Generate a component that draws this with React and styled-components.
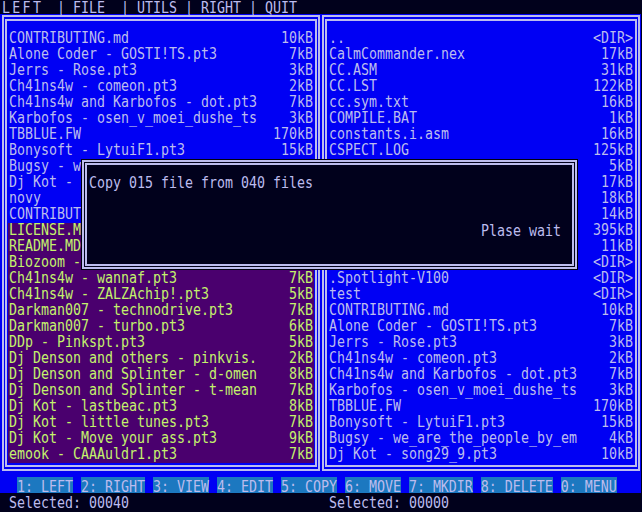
import React from 'react';
import styled, { createGlobalStyle } from 'styled-components';

const C = {
  navy: '#01011c',
  blue: '#0000f4',
  ink: '#bcbcee',
  purple: '#4a006e',
  lime: '#c4f26c',
  key: '#1c78c0',
};

const GlobalStyle = createGlobalStyle`
  html, body {
    margin: 0;
    padding: 0;
    background: ${C.navy};
  }
  body {
    font-family: "DejaVu Sans Mono", "Liberation Mono", monospace;
    font-size: 13.29px;
  }
`;

const Screen = styled.div`
  position: relative;
  width: 642px;
  height: 512px;
  background: ${C.navy};
  color: ${C.ink};
  display: flex;
  flex-direction: column;
  overflow: hidden;
`;

// tall, narrow "ZX" look: stretch the glyphs vertically
const Txt = styled.span`
  display: inline-block;
  white-space: pre;
  line-height: ${({ $lh }) => $lh || 16}px;
  letter-spacing: ${({ $ls }) => $ls || 0}px;
  transform: translateY(${({ $dy }) => ($dy || 0) - 0.6}px) scaleY(1.22);
`;

const MenuBar = styled.div`
  height: 15px;
  box-sizing: border-box;
  padding: 2px 0 0 2px;
  display: flex;
`;

const MenuFirst = styled.div`
  width: 55px;
  display: flex;
`;

const Panels = styled.div`
  width: 641px;
  display: flex;
  background: ${C.blue};
  padding-left: 1px;
  box-sizing: border-box;
`;

const Panel = styled.div`
  width: 320px;
  height: 463px;
  box-sizing: border-box;
  padding: 1px 1px 6px;
`;

const OuterFrame = styled.div`
  height: 100%;
  box-sizing: border-box;
  border: 2px solid ${C.ink};
  padding: 2px 1px;
`;

const InnerFrame = styled.div`
  height: 100%;
  box-sizing: border-box;
  border: 2px solid ${C.ink};
  padding: 10px 1px 2px;
  display: flex;
  flex-direction: column;
`;

const Row = styled.div`
  height: 16px;
  display: flex;
  justify-content: space-between;
  padding: 0 1px;
  background: ${({ $sel }) => ($sel ? C.purple : 'transparent')};
  color: ${({ $sel }) => ($sel ? C.lime : C.ink)};
`;

const Dialog = styled.div`
  position: absolute;
  left: 81px;
  top: 159px;
  width: 497px;
  height: 111px;
  box-sizing: border-box;
  border: 1px solid #000010;
  background: ${C.navy};
`;

const DialogFrame = styled.div`
  height: 100%;
  box-sizing: border-box;
  border: 2px solid ${C.ink};
  padding: 1px;
`;

const DialogBody = styled.div`
  height: 100%;
  box-sizing: border-box;
  border: 2px solid ${C.ink};
  padding: 11px 11px 0 2px;
  display: flex;
  flex-direction: column;
`;

const DialogLine = styled.div`
  height: 16px;
  display: flex;
  justify-content: ${({ $right }) => ($right ? 'flex-end' : 'flex-start')};
  margin-top: ${({ $gap }) => $gap || 0}px;
`;

const KeyBar = styled.div`
  width: 641px;
  height: 16px;
  background: ${C.blue};
  display: flex;
  gap: 8px;
  padding-left: 17px;
  box-sizing: border-box;
`;

const Key = styled.div`
  height: 16px;
  background: ${C.key};
  display: flex;
`;

const StatusBar = styled.div`
  flex: 1;
  display: grid;
  grid-template-columns: 320px 320px;
  padding: 3px 0 0 1px;
`;

const StatusCell = styled.div`
  padding-left: 8px;
  height: 16px;
  display: flex;
`;

const leftFiles = [
  ['CONTRIBUTING.md', '10kB'],
  ['Alone Coder - GOSTI!TS.pt3', '7kB'],
  ['Jerrs - Rose.pt3', '3kB'],
  ['Ch41ns4w - comeon.pt3', '2kB'],
  ['Ch41ns4w and Karbofos - dot.pt3', '7kB'],
  ['Karbofos - osen_v_moei_dushe_ts', '3kB'],
  ['TBBLUE.FW', '170kB'],
  ['Bonysoft - LytuiF1.pt3', '15kB'],
  ['Bugsy - we_are_the_people_by_em', '4kB'],
  ['Dj Kot - song29_9.pt3', '10kB'],
  ['novy', '<DIR>'],
  ['CONTRIBUTING.md', '10kB'],
  ['LICENSE.MD', '1kB', true],
  ['README.MD', '3kB', true],
  ['Biozoom - nightfall.pt3', '6kB', true],
  ['Ch41ns4w - wannaf.pt3', '7kB', true],
  ['Ch41ns4w - ZALZAchip!.pt3', '5kB', true],
  ['Darkman007 - technodrive.pt3', '7kB', true],
  ['Darkman007 - turbo.pt3', '6kB', true],
  ['DDp - Pinkspt.pt3', '5kB', true],
  ['Dj Denson and others - pinkvis.', '2kB', true],
  ['Dj Denson and Splinter - d-omen', '8kB', true],
  ['Dj Denson and Splinter - t-mean', '7kB', true],
  ['Dj Kot - lastbeac.pt3', '8kB', true],
  ['Dj Kot - little tunes.pt3', '7kB', true],
  ['Dj Kot - Move your ass.pt3', '9kB', true],
  ['emook - CAAAuldr1.pt3', '7kB', true],
];

const rightFiles = [
  ['..', '<DIR>'],
  ['CalmCommander.nex', '17kB'],
  ['CC.ASM', '31kB'],
  ['CC.LST', '122kB'],
  ['cc.sym.txt', '16kB'],
  ['COMPILE.BAT', '1kB'],
  ['constants.i.asm', '16kB'],
  ['CSPECT.LOG', '125kB'],
  ['cspect.txt', '5kB'],
  ['enNextZX.rom', '17kB'],
  ['esxmmc.bin', '18kB'],
  ['LICENSE.MD', '14kB'],
  ['NextZXOS.rom', '395kB'],
  ['README.MD', '11kB'],
  ['tools', '<DIR>'],
  ['.Spotlight-V100', '<DIR>'],
  ['test', '<DIR>'],
  ['CONTRIBUTING.md', '10kB'],
  ['Alone Coder - GOSTI!TS.pt3', '7kB'],
  ['Jerrs - Rose.pt3', '3kB'],
  ['Ch41ns4w - comeon.pt3', '2kB'],
  ['Ch41ns4w and Karbofos - dot.pt3', '7kB'],
  ['Karbofos - osen_v_moei_dushe_ts', '3kB'],
  ['TBBLUE.FW', '170kB'],
  ['Bonysoft - LytuiF1.pt3', '15kB'],
  ['Bugsy - we_are_the_people_by_em', '4kB'],
  ['Dj Kot - song29_9.pt3', '10kB'],
];

const keys = ['1: LEFT', '2: RIGHT', '3: VIEW', '4: EDIT', '5: COPY', '6: MOVE', '7: MKDIR', '8: DELETE', '0: MENU'];

const FilePanel = ({ files }) => (
  <Panel>
    <OuterFrame>
      <InnerFrame>
        {files.map(([name, size, sel], i) => (
          <Row key={i} $sel={sel}>
            <Txt>{name}</Txt>
            <Txt>{size}</Txt>
          </Row>
        ))}
      </InnerFrame>
    </OuterFrame>
  </Panel>
);

export default function App() {
  return (
    <>
      <GlobalStyle />
      <Screen>
        <MenuBar>
          <MenuFirst>
            <Txt $lh={12} $dy={0.4} $ls={2.3}>LEFT</Txt>
          </MenuFirst>
          <Txt $lh={12} $dy={0.4}>{'| FILE  | UTILS | RIGHT | QUIT'}</Txt>
        </MenuBar>
        <Panels>
          <FilePanel files={leftFiles} />
          <FilePanel files={rightFiles} />
        </Panels>
        <KeyBar>
          {keys.map((k) => (
            <Key key={k}>
              <Txt $dy={3}>{k}</Txt>
            </Key>
          ))}
        </KeyBar>
        <StatusBar>
          <StatusCell>
            <Txt>Selected: 00040</Txt>
          </StatusCell>
          <StatusCell>
            <Txt>Selected: 00000</Txt>
          </StatusCell>
        </StatusBar>
        <Dialog>
          <DialogFrame>
            <DialogBody>
              <DialogLine>
                <Txt>Copy 015 file from 040 files</Txt>
              </DialogLine>
              <DialogLine $right $gap={32}>
                <Txt>Plase wait</Txt>
              </DialogLine>
            </DialogBody>
          </DialogFrame>
        </Dialog>
      </Screen>
    </>
  );
}
